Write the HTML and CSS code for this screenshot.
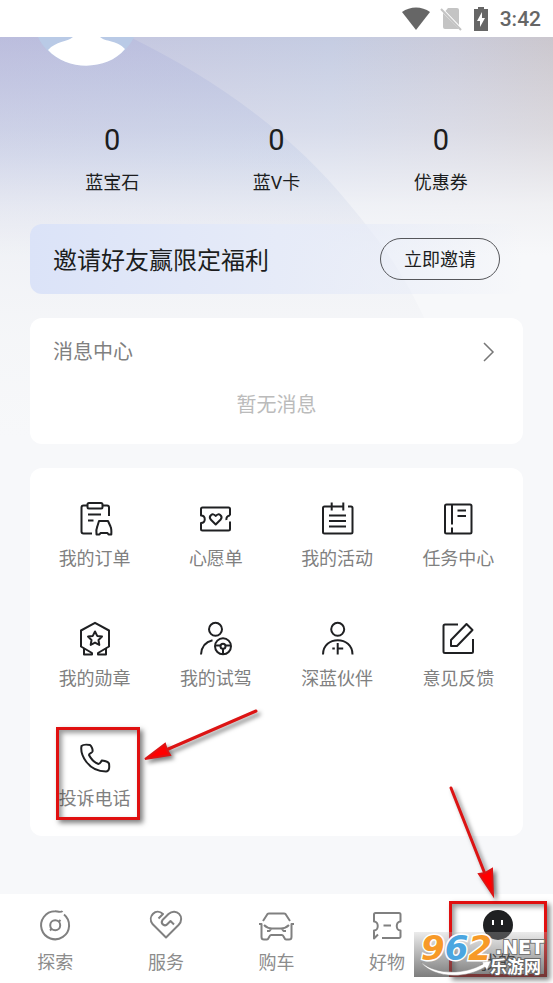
FILE: index.html
```html
<!DOCTYPE html>
<html lang="zh-CN">
<head>
<meta charset="utf-8">
<meta name="viewport" content="width=device-width, initial-scale=1">
<title>我的</title>
<link rel="stylesheet" href="styles.css">
</head>
<body>
<header class="status">
  <svg width="28" height="24" viewBox="0 0 28 24"><path fill="#666" d="M0 5C8-1 20-1 28 5L14 23Z"/></svg>
  <svg width="22" height="24" viewBox="0 0 22 24"><path fill="#c4c4c4" d="M8 1h9a2 2 0 0 1 2 2v15L5.500 4ZM3 6l16 16H5a2 2 0 0 1-2-2Z"/><path stroke="#c4c4c4" stroke-width="2" d="M1 2l20 21"/></svg>
  <svg width="14" height="24" viewBox="0 0 14 24"><path fill="#666" d="M4 0h6v2h4v22H0V2h4Z"/><path fill="#fff" d="M8 5v6h3L6 20v-6H3Z"/></svg>
  <time class="time">3:42</time>
</header>

<main class="page">
  <svg class="hero" viewBox="0 0 553 420" preserveAspectRatio="none" aria-hidden="true">
    <defs>
      <linearGradient id="sky"><stop offset="0" stop-color="#c5c5df"/><stop offset=".6" stop-color="#c5cce2"/><stop offset=".82" stop-color="#cacbda"/><stop offset="1" stop-color="#cbc7ce"/></linearGradient>
      <linearGradient id="hill" x1="0" x2="0" y1="0" y2="1"><stop offset="0" stop-color="#b2b6dc" stop-opacity=".5"/><stop offset=".3" stop-color="#b9c7e4" stop-opacity=".3"/><stop offset=".5" stop-color="#d8dbe8" stop-opacity=".25"/><stop offset=".75" stop-color="#e9ebef" stop-opacity=".15"/><stop offset="1" stop-color="#e9ebef" stop-opacity="0"/></linearGradient>
      <linearGradient id="fade" x1="0" x2="0" y1="0" y2="1"><stop offset="0" stop-color="#f6f7fa" stop-opacity="0"/><stop offset=".22" stop-color="#f6f7fa" stop-opacity=".38"/><stop offset=".4" stop-color="#f7f8fa" stop-opacity=".84"/><stop offset=".52" stop-color="#f7f8fa"/></linearGradient>
    </defs>
    <path fill="url(#sky)" d="M0 0h553v420H0z"/>
    <path fill="url(#fade)" d="M0 0h553v420H0z"/>
    <path fill="url(#hill)" d="M0 0H130C215 42 292 96 350 168C392 219 424 259 470 400H0Z"/>
  </svg>

  <div class="avatar">
    <svg width="96" height="30" viewBox="0 0 96 30" role="img" aria-label="头像"><path fill="#b9cae6" d="M0 0h96C78 38 18 38 0 0Z"/><path fill="#fff" d="M35 0h27c5 5 17 3 25 12C69 34 29 34 10 13 18 4 29 5 35 0Z"/></svg>
  </div>

  <section class="stats">
    <a class="stat" href="#gem"><b>0</b><span>蓝宝石</span></a>
    <a class="stat" href="#vcard"><b>0</b><span>蓝V卡</span></a>
    <a class="stat" href="#coupon"><b>0</b><span>优惠券</span></a>
  </section>

  <section class="invite">
    <h2>邀请好友赢限定福利</h2>
    <button type="button">立即邀请</button>
  </section>

  <section class="card messages">
    <a class="messages-head" href="#messages"><span>消息中心</span>
      <svg width="12" height="20" viewBox="0 0 12 20" fill="none" stroke="#777" stroke-width="1.5"><path d="M1 1l9 9-9 9"/></svg></a>
    <p>暂无消息</p>
  </section>

  <section class="card tools">
    <a class="tool" href="#orders"><svg viewBox="0 0 36 36"><path d="M10 5.500H6.500a2 2 0 0 0-2 2v24a2 2 0 0 0 2 2h8.500M26 5.500h4a2 2 0 0 1 2 2v8.500"/><rect x="10.500" y="3" width="15" height="5.500" rx="1.500"/><path d="M11 14.500h13M11 20.500h5.500M22 21h9l2.500 5.500c1 2 1 5 .8 8h-2.800l-1-1.500h-7l-1 1.500h-3c-.3-3-.2-6 .8-8Z"/></svg><span>我的订单</span></a>
    <a class="tool" href="#wishes"><svg viewBox="0 0 36 36"><path d="M32 15.500V9a1.500 1.500 0 0 0-1.500-1.500h-26A1.500 1.500 0 0 0 3 9v6.500c5 0 5 7.500 0 7.500v6a1.500 1.500 0 0 0 1.500 1.500h26A1.500 1.500 0 0 0 32 29v-7.500M32 15.500c-2.500 0-4 2-3.500 4.500"/><path d="M17.700 24.500l-5-5c-2.500-3.500 2-7.500 5-3.500 3-4 7.500 0 5 3.500Z"/></svg><span>心愿单</span></a>
    <a class="tool" href="#events"><svg viewBox="0 0 36 36"><path d="M25 6.500H5.500a1.500 1.500 0 0 0-1.500 1.500v24a1.500 1.500 0 0 0 1.500 1.500H32a1.500 1.500 0 0 0 1.500-1.500V8A1.500 1.500 0 0 0 32 6.500h-3M12.700 2.500v8M24.300 2.500v8M10 15.500h17M10 21h17M10 26.500h17"/></svg><span>我的活动</span></a>
    <a class="tool" href="#tasks"><svg viewBox="0 0 36 36"><rect x="5" y="4.500" width="26.500" height="29" rx="1.500"/><path d="M12 5v19.500M12 27.500V33M17.500 10.500H26M17.500 16H26"/></svg><span>任务中心</span></a>
    <a class="tool" href="#medals"><svg viewBox="0 0 36 36"><path d="M15 33L4 26.500v-16L18 2.800l14 7.700v16L21 33M7 28.500v6h8V32.500M29 28.500v6h-8V32.500"/><path d="M18 11.500l2.200 4.400 4.800.7-3.500 3.400.8 4.900-4.300-2.300-4.300 2.300.8-4.900-3.500-3.400 4.800-.7Z"/></svg><span>我的勋章</span></a>
    <a class="tool" href="#drive"><svg viewBox="0 0 36 36"><circle cx="17.500" cy="9.300" r="6.500"/><path d="M3 34.500C3.500 27 7 22 14.500 20.300"/><circle cx="25" cy="26.300" r="8"/><circle cx="25" cy="26.300" r="2.500"/><path d="M17.500 25.500h5M27.500 25.500h5M25 29v5"/></svg><span>我的试驾</span></a>
    <a class="tool" href="#partners"><svg viewBox="0 0 36 36"><circle cx="18.700" cy="9.300" r="6.500"/><path d="M4 34.500c0-19 29.500-19 29.500 0M18.700 23v11.500M13.300 28.500h2.500M18.700 28.500h5.500"/></svg><span>深蓝伙伴</span></a>
    <a class="tool" href="#feedback"><svg viewBox="0 0 36 36"><path d="M18 4.500H5A1.500 1.500 0 0 0 3.500 6v25.500A1.500 1.500 0 0 0 5 33h26.500a1.500 1.500 0 0 0 1.500-1.500V19"/><path d="M26.500 4l6 6-15.500 16h-6v-6Z"/></svg><span>意见反馈</span></a>
    <a class="tool" href="#hotline"><svg viewBox="0 0 36 36"><path d="M25 20.500c-1 .5-1.500 3.500-3.500 3.500-4-1.500-7.500-5-9.500-9 0-1.500 3-2 3.500-3.500.5-2-1-5.500-2.500-6.500-3-.5-7-.5-8.500 1-1.500 8 6 25.500 24.500 25.500 3.500 0 3.500-4.500 3-8-.7-1.500-3.500-2.500-7-3Z"/></svg><span>投诉电话</span>
      <i class="frame frame-tool"></i>
      <svg class="arrow arrow-tool" viewBox="0 0 120 60"><path class="shaft" d="M114 4L24 43"/><path class="head" d="M3 52L23 37l2 6 3 5Z"/></svg>
    </a>
  </section>
</main>

<nav class="tabs">
  <a class="tab" href="#explore"><svg viewBox="0 0 36 36"><path d="M25.500 4C24 6 20 4.200 18 4.300a14 14 0 1 0 9 3.200"/><circle cx="18.200" cy="18.300" r="5"/><path d="M21.500 15l2-2M15 21.500l-2 2"/></svg><span>探索</span></a>
  <a class="tab" href="#service"><svg viewBox="0 0 36 36"><path d="M10.500 11.500L15 7C8 .5-1 9.500 4.500 17L18 30.500l12.500-12.500C38 10 28 0 20.500 7l-6 6c-2.500 4 2.500 7 5 4l3-3 3.500 3.500"/></svg><span>服务</span></a>
  <a class="tab" href="#cars"><svg viewBox="0 0 36 36"><path d="M5 14l4.500-7Q10 6.500 11 6.500h15q1 0 1.500.5L32 14M1 17h2.500v13a2.500 2.500 0 0 0 2.500 2.500h3c2 0 2-4.500 4-4.500h11c2 0 2 4.500 4 4.500h3a2.500 2.500 0 0 0 2.500-2.500V17H36M6 18c3 3 6 3.500 8 3.500h9c2 0 5-.5 8-3.500M9 24h2.500l1.500-2M28 24h-2.500L24 22"/></svg><span>购车</span></a>
  <a class="tab" href="#goods"><svg viewBox="0 0 36 36"><path d="M13 31h17a1.500 1.500 0 0 0 1.500-1.500v-6c-5 0-5-9 0-9v-7A1.500 1.500 0 0 0 30 6H6.500A1.500 1.500 0 0 0 5 7.500v7c5 0 5 9 0 9v8l4-4M14.500 18.500H22"/></svg><span>好物</span></a>
  <a class="tab active" href="#me" aria-current="page"><svg viewBox="0 0 36 36"><circle class="face" cx="18" cy="18" r="15"/><path class="eyes" d="M13 13v5M22 13v5"/></svg><span>我的</span>
    <i class="frame frame-tab"></i>
    <svg class="arrow arrow-tab" viewBox="0 0 60 120"><path class="shaft" d="M8 6L42 92"/><path class="head" d="M50 113L36 92l6-1 7-4Z"/></svg>
  </a>
  <div class="mark">
    <svg class="swoosh" viewBox="0 0 133 45"><path fill="#fff" stroke="#888" stroke-width=".5" d="M7 30c15 13 43 13 62 2l-1-2 9-1-4 9-2-3C48 49 16 44 7 30Z"/></svg>
    <span class="mark-number"><b>9</b><b class="blue">6</b><b>2</b></span>
    <span class="mark-net">.NET</span>
    <span class="mark-name">乐游网</span>
  </div>
</nav>
</body>
</html>
```
FILE: styles.css
```css
* { box-sizing: border-box; }

body {
  margin: 0;
  min-height: 100vh;
  display: flex;
  flex-direction: column;
  background: #f7f8fa;
  color: #1c1d20;
  font-family: Roboto, "Noto Sans CJK SC", sans-serif;
  font-size: 18px;
  line-height: 24px;
  overflow-x: hidden;
}

a { color: inherit; text-decoration: none; }
h2, p { margin: 0; font-weight: 400; }

.status {
  height: 37px;
  padding: 0 12px;
  display: flex;
  align-items: center;
  justify-content: flex-end;
  background: #fff;
}
.status svg { margin-right: 10px; }
.status svg:nth-child(2),
.status svg:nth-child(3) { margin-right: 12px; }
.time { font-weight: 500; font-size: 21px; color: #666; }

.page {
  position: relative;
  flex: 1;
  padding: 0 30px 58px;
}
.hero {
  position: absolute;
  inset: 0 0 auto;
  width: 100%;
  height: 420px;
}
.page > :not(.hero) { position: relative; }

.avatar { height: 85px; padding-left: 8px; }
.avatar svg { display: block; }

.stats { display: grid; grid-template-columns: repeat(3, 1fr); }
.stat {
  display: flex;
  flex-direction: column;
  align-items: center;
  gap: 13px;
}
.stat b { font-size: 29px; font-weight: 400; line-height: 36px; }

.invite {
  margin-top: 29px;
  height: 70px;
  padding: 0 23px;
  display: flex;
  align-items: center;
  justify-content: space-between;
  border-radius: 12px;
  background: linear-gradient(90deg, #dbe3f8, #e6ebf8 50%, rgba(246, 248, 252, 0));
}
.invite h2 { padding-top: 3px; font-size: 24px; line-height: 32px; }
.invite button {
  width: 120px;
  height: 42px;
  padding: 2px 0 0;
  border: 1px solid #55565a;
  border-radius: 21px;
  background: none;
  color: inherit;
  font: inherit;
}

.card { margin-top: 24px; border-radius: 12px; background: #fff; }
.messages { height: 126px; padding: 19px 28px 0 23px; font-size: 20px; line-height: 30px; }
.messages-head { display: flex; justify-content: space-between; align-items: center; color: #808080; }
.messages p { margin: 23px -5px 0 0; text-align: center; color: #bbb; }

.tools {
  padding: 32px 4px 25px;
  display: grid;
  grid-template-columns: repeat(4, 1fr);
  row-gap: 49px;
}
.tool, .tab {
  position: relative;
  display: flex;
  flex-direction: column;
  align-items: center;
  color: #808080;
}
.tool { gap: 11px; }
.tool > svg, .tab > svg {
  width: 36px;
  height: 36px;
  fill: none;
  stroke: #1f2022;
  stroke-width: 2;
  stroke-linejoin: round;
}
.tab > svg { stroke: #808080; }

.tabs {
  position: relative;
  height: 89px;
  padding-top: 13px;
  display: grid;
  grid-template-columns: repeat(5, 1fr);
  background: #fff;
}
.tab { gap: 8px; color: #8c8c8c; }
.active { color: #222; }
.tab .face { fill: #1f2022; stroke: none; }
.tab .eyes { stroke: #fff; }

.frame {
  position: absolute;
  border: 3px solid #e01010;
  box-shadow: 3px 3px 5px rgba(0, 0, 0, .5), inset 3px 3px 5px rgba(0, 0, 0, .4);
}
.frame-tool { left: 50%; top: -13px; width: 84px; height: 93px; margin-left: -39px; }
.frame-tab { left: 50%; top: -6px; width: 98px; height: 76px; margin-left: -49px; }

.tool > .arrow, .tab > .arrow {
  position: absolute;
  left: 50%;
  overflow: visible;
  filter: drop-shadow(3px 3px 2px rgba(0, 0, 0, .5));
}
.tool > .arrow-tool { top: -33px; width: 120px; height: 60px; margin-left: 47px; }
.tab > .arrow-tab { top: -125px; width: 60px; height: 120px; margin-left: -55px; }
.arrow .shaft { stroke: #dc1414; stroke-width: 3; stroke-linecap: round; }
.arrow .head { fill: #f00; stroke: #dc1414; stroke-width: 2; stroke-linejoin: miter; }

.mark {
  position: absolute;
  right: 6px;
  bottom: 6px;
  width: 133px;
  height: 45px;
  background: linear-gradient(rgba(190, 190, 190, .3), rgba(70, 70, 70, .7));
  color: #fff;
}
.swoosh { position: absolute; inset: 0; }
.mark-number {
  position: absolute;
  left: 7px;
  top: -2px;
  font: italic 700 34px/36px "DejaVu Sans", sans-serif;
  color: #f79a28;
  -webkit-text-stroke: 3px #fff;
  paint-order: stroke fill;
}
.mark-number .blue { color: #4ba6e0; }
.mark-net {
  position: absolute;
  right: 3px;
  top: 5px;
  font: 700 19px/20px "DejaVu Sans", sans-serif;
  -webkit-text-stroke: 2px #777;
  paint-order: stroke fill;
}
.mark-name {
  position: absolute;
  right: 6px;
  top: 25px;
  font-size: 17px;
  font-weight: 700;
  line-height: 20px;
  -webkit-text-stroke: 2px #666;
  paint-order: stroke fill;
}
```
